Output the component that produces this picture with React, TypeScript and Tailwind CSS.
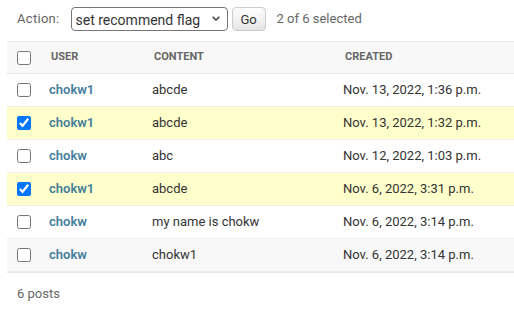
import React from 'react';

type Row = { user: string; content: string; created: string; selected: boolean };

const rows: Row[] = [
    { user: 'chokw1', content: 'abcde', created: 'Nov. 13, 2022, 1:36 p.m.', selected: false },
    { user: 'chokw1', content: 'abcde', created: 'Nov. 13, 2022, 1:32 p.m.', selected: true },
    { user: 'chokw', content: 'abc', created: 'Nov. 12, 2022, 1:03 p.m.', selected: false },
    { user: 'chokw1', content: 'abcde', created: 'Nov. 6, 2022, 3:31 p.m.', selected: true },
    { user: 'chokw', content: 'my name is chokw', created: 'Nov. 6, 2022, 3:14 p.m.', selected: false },
    { user: 'chokw', content: 'chokw1', created: 'Nov. 6, 2022, 3:14 p.m.', selected: false },
];

const App: React.FC = () => {
    return (
        <div className="w-[514px] h-[315px] overflow-hidden bg-white pl-[7px] font-['Roboto',sans-serif] text-[#333]">
            {/* Actions bar */}
            <div className="flex items-center pt-[7px] pb-[10px] pl-[10px] text-[13px] text-[#666] leading-6">
                <label className="tracking-[0.3px]">Action:</label>
                <div className="relative ml-[11px]">
                    <select
                        defaultValue="flag"
                        className="appearance-none block w-[157px] h-[24px] border border-[#767676] rounded-[4px] pl-[4px] text-[14px] text-[#333] bg-white"
                    >
                        <option value="">---------</option>
                        <option value="flag">set recommend flag</option>
                    </select>
                    <svg
                        className="absolute right-[8px] top-[9px] pointer-events-none"
                        width="8"
                        height="5"
                        viewBox="0 0 8 5"
                        fill="none"
                    >
                        <path d="M0.7 0.7 L4 4 L7.3 0.7" stroke="#333" strokeWidth="1.3" />
                    </svg>
                </div>
                <button className="ml-[4px] w-[34px] h-[24px] border border-[#ccc] rounded-[4px] bg-white text-[13px] text-[#333] leading-none shadow-[inset_0_-15px_20px_-10px_rgba(0,0,0,0.15)]">
                    Go
                </button>
                <span className="ml-[11px]">2 of 6 selected</span>
            </div>

            {/* Results table */}
            <table className="w-full table-fixed border-collapse">
                <colgroup>
                    <col className="w-[34px]" />
                    <col className="w-[103px]" />
                    <col className="w-[191px]" />
                    <col />
                </colgroup>
                <thead>
                    <tr className="bg-[#f8f8f8] border-t border-b border-[#e8e8e8] h-[32px] text-[11px] font-semibold uppercase text-[#666] text-left">
                        <th className="pl-[10px]">
                            <input type="checkbox" className="block w-[14px] h-[14px]" />
                        </th>
                        <th className="px-[10px]">User</th>
                        <th className="px-[10px]">Content</th>
                        <th className="px-[10px]">Created</th>
                    </tr>
                </thead>
                <tbody className="text-[13px] leading-4">
                    {rows.map((r, i) => (
                        <tr
                            key={i}
                            className={
                                'border-b border-[#eee] ' +
                                (r.selected ? 'bg-[#ffc]' : i % 2 === 1 ? 'bg-[#f8f8f8]' : 'bg-white')
                            }
                        >
                            <td className="pl-[10px] py-[8px]">
                                <input type="checkbox" defaultChecked={r.selected} className="block w-[14px] h-[14px]" />
                            </td>
                            <th className="p-[8px] text-left font-semibold text-[#447e9b]">{r.user}</th>
                            <td className="p-[8px]">{r.content}</td>
                            <td className="p-[8px] whitespace-nowrap">{r.created}</td>
                        </tr>
                    ))}
                </tbody>
            </table>

            {/* Paginator */}
            <p className="border-t border-[#e8e8e8] pt-[10px] pl-[10px] text-[13px] leading-[22px] text-[#666]">6 posts</p>
        </div>
    );
};

export default App;
